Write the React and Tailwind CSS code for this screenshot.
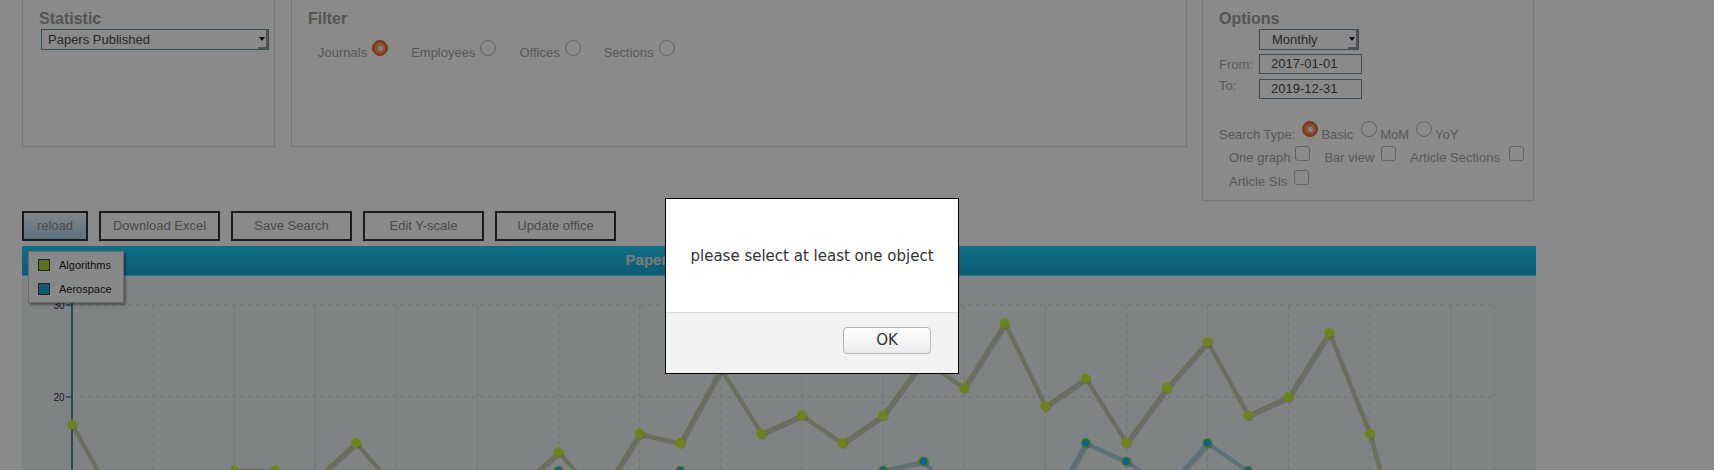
import React from "react";

const ALG = [17, 9, 8, 10, 12, 12, 11, 15, 10, 7, 9, 10, 14, 9, 16, 15, 23, 16, 18, 15, 18, 24, 21, 28, 19, 22, 15, 21, 26, 18, 20, 27, 16, 0, 0, 0];
const AER = [3, 2, 4, 5, 3, 6, 4, 5, 7, 4, 6, 8, 12, 7, 9, 12, 8, 6, 9, 8, 12, 13, 8, 9, 7, 15, 13, 10, 15, 12, 8, 10, 7, 0, 0, 0];

// plot coords are relative to the plot area (page x - 22, page y - 276)
const X0 = 50;
const STEP = 40.55;
const px = (i) => X0 + STEP * i;
const py = (v) => 29 + (30 - v) * 9.2;
const toPath = (data) => data.map((v, i) => `${i ? "L" : "M"}${px(i)},${py(v)}`).join(" ");

function Radio({ checked }) {
  if (checked) {
    return (
      <span className="flex h-4 w-4 shrink-0 items-center justify-center rounded-full border border-[#c8602f] bg-[#f4793f]">
        <span className="flex h-[10px] w-[10px] items-center justify-center rounded-full bg-[#ff9a66]">
          <span className="h-[5px] w-[5px] rounded-full bg-[#f2f2f2]" />
        </span>
      </span>
    );
  }
  return <span className="block h-4 w-4 shrink-0 rounded-full border border-[#b4b4b4] bg-white" />;
}

function Checkbox() {
  return <span className="mb-[4px] block h-[15px] w-[15px] shrink-0 rounded-[3px] border border-[#b4b4b4] bg-white" />;
}

function FakeSelect({ value, className }) {
  return (
    <div className={`flex h-[21px] items-center justify-between border border-[#6f8998] bg-white text-[13px] text-[#4a4a4a] ${className}`}>
      <span>{value}</span>
      <span className="flex h-full w-[10px] items-center justify-center border-b-2 border-r-2 border-[#9a9a9a]">
        <span className="h-0 w-0 border-l-[3px] border-r-[3px] border-t-[4px] border-l-transparent border-r-transparent border-t-[#111]" />
      </span>
    </div>
  );
}

function Series({ data, line, fill, ring }) {
  const d = toPath(data);
  return (
    <g>
      <path d={d} transform="translate(1.5,1.5)" fill="none" stroke="rgba(0,0,0,0.16)" strokeWidth="4" strokeLinejoin="round" />
      <path d={d} fill="none" stroke={line} strokeWidth="3.5" strokeLinejoin="round" />
      {data.map((v, i) => (
        <g key={i}>
          <circle cx={px(i) + 1} cy={py(v) + 1} r="4.8" fill="rgba(0,0,0,0.14)" />
          <circle cx={px(i)} cy={py(v)} r="4.5" fill={fill} stroke={ring} strokeWidth="1" />
        </g>
      ))}
    </g>
  );
}

function Chart() {
  const verticals = [];
  for (let k = 1; k <= 17; k++) verticals.push(X0 + 81.1 * k);
  return (
    <svg width="1514" height="194" className="block">
      {verticals.map((x) => (
        <line key={x} x1={x} y1={29} x2={x} y2={194} stroke="#cbd3d3" strokeDasharray="4 4" />
      ))}
      <line x1={1472} y1={29} x2={1472} y2={194} stroke="#cbd3d3" strokeDasharray="4 4" />
      {[29, 121].map((y) => (
        <line key={y} x1={X0} y1={y} x2={1472} y2={y} stroke="#cbd3d3" strokeDasharray="4 4" />
      ))}
      <line x1={X0} y1={27} x2={X0} y2={194} stroke="#56899b" strokeWidth="2" />
      {[
        [30, 29],
        [20, 121],
      ].map(([v, y]) => (
        <g key={v}>
          <line x1={44} y1={y} x2={X0} y2={y} stroke="#56899b" strokeWidth="1.5" />
          <text x={42.5} y={y + 3.6} textAnchor="end" fontSize="10" fill="#333" fontFamily="Liberation Sans, Arial, sans-serif">
            {v}
          </text>
        </g>
      ))}
      <Series data={AER} line="#a8cfdd" fill="#14bfee" ring="#c8e400" />
      <Series data={ALG} line="#c4cead" fill="#c0f542" ring="#f0f000" />
    </svg>
  );
}

export default function App() {
  return (
    <div className="relative h-screen overflow-hidden bg-white font-['Liberation_Sans',Arial,sans-serif] text-[13px]">
      <div className="pl-[22px]">
        {/* top panels (page is scrolled a little, top borders are off screen) */}
        <div className="-mt-[6px] flex items-start">
          <section className="h-[153px] w-[253px] border border-[#dddddd] pl-[16px] pt-[15px]">
            <h3 className="text-[16px] font-bold leading-[18px] text-[#9b9b9b]">Statistic</h3>
            <FakeSelect value="Papers Published" className="ml-[2px] mt-[1px] w-[228px] pl-[6px]" />
          </section>

          <section className="ml-[16px] h-[153px] w-[896px] border border-[#dddddd] pl-[16px] pt-[15px]">
            <h3 className="text-[16px] font-bold leading-[18px] text-[#9b9b9b]">Filter</h3>
            <div className="ml-[10px] mt-[12px] flex items-end text-[#a6a6a6]">
              {[
                ["Journals", true],
                ["Employees", false],
                ["Offices", false],
                ["Sections", false],
              ].map(([name, on]) => (
                <label key={name} className="mr-[23px] flex items-end">
                  <span className="leading-[15px]">{name}</span>
                  <span className="mb-[4px] ml-[5px] flex">
                    <Radio checked={on} />
                  </span>
                </label>
              ))}
            </div>
          </section>

          <section className="ml-[15px] h-[207px] w-[332px] border border-[#dddddd] pl-[16px] pt-[15px] text-[#a6a6a6]">
            <h3 className="text-[16px] font-bold leading-[18px] text-[#9b9b9b]">Options</h3>
            <FakeSelect value="Monthly" className="ml-[40px] mt-[1px] w-[100px] pl-[12px]" />
            <div className="mt-[4px] flex items-center">
              <span className="w-[40px] leading-[15px]">From:</span>
              <div className="flex h-[20px] w-[103px] items-center border border-[#6f8998] bg-white pl-[11px] text-[#4a4a4a]">2017-01-01</div>
            </div>
            <div className="mt-[5px] flex items-start">
              <span className="-mt-px w-[40px] leading-[15px]">To:</span>
              <div className="flex h-[20px] w-[103px] items-center border border-[#6f8998] bg-white pl-[11px] text-[#4a4a4a]">2019-12-31</div>
            </div>
            <div className="mt-[22px] flex items-end">
              <span className="leading-[15px]">Search Type:</span>
              <span className="mb-[5px] ml-[7px] flex">
                <Radio checked />
              </span>
              <span className="ml-[3px] leading-[15px]">Basic</span>
              <span className="mb-[5px] ml-[8px] flex">
                <Radio />
              </span>
              <span className="ml-[3px] leading-[15px]">MoM</span>
              <span className="mb-[5px] ml-[7px] flex">
                <Radio />
              </span>
              <span className="ml-[3px] leading-[15px]">YoY</span>
            </div>
            <div className="ml-[10px] mt-[4px] flex items-end">
              <span className="leading-[15px]">One graph</span>
              <span className="ml-[5px] flex">
                <Checkbox />
              </span>
              <span className="ml-[14px] leading-[15px]">Bar view</span>
              <span className="ml-[7px] flex">
                <Checkbox />
              </span>
              <span className="ml-[14px] leading-[15px]">Article Sections</span>
              <span className="ml-[9px] flex">
                <Checkbox />
              </span>
            </div>
            <div className="ml-[10px] mt-[5px] flex items-end">
              <span className="leading-[15px]">Article SIs</span>
              <span className="ml-[6px] flex">
                <Checkbox />
              </span>
            </div>
          </section>
        </div>

        {/* action buttons */}
        <div className="mt-[10px] flex gap-[11px]">
          <button className="h-[30px] w-[66px] border-2 border-[#343434] bg-gradient-to-b from-[#f2f8ff] to-[#a9d0ec] text-[#8a8a8a]">reload</button>
          {["Download Excel", "Save Search", "Edit Y-scale", "Update office"].map((b) => (
            <button key={b} className="h-[30px] w-[121px] border-2 border-[#343434] bg-white text-[#8a8a8a]">
              {b}
            </button>
          ))}
        </div>

        {/* chart */}
        <div className="relative mt-[5px] w-[1514px] bg-[#ebf2f2]">
          <div className="flex h-[30px] items-center justify-center border-b border-[#4fd6f5] bg-gradient-to-b from-[#20cdf5] to-[#18a8d6] text-[15px] font-bold text-[#e4e4e4]">
            Papers Published (2017-01-01 - 2019-12-31)
          </div>
          <Chart />
          <div className="absolute left-[6px] top-[5px] flex h-[52px] w-[96px] flex-col justify-center gap-[8px] border border-[#c4c4c4] bg-[#fafcfc] pl-[9px] text-[11px] text-[#222] shadow-[2px_2px_2px_rgba(0,0,0,0.35)]">
            <div className="flex items-center gap-[9px]">
              <span className="h-[12px] w-[12px] border border-[#444] bg-[#a8cd39]" />
              Algorithms
            </div>
            <div className="flex items-center gap-[9px]">
              <span className="h-[12px] w-[12px] border border-[#444] bg-[#1aa8d1]" />
              Aerospace
            </div>
          </div>
        </div>
      </div>

      {/* modal */}
      <div className="fixed inset-0 bg-black/[0.46]" />
      <div className="fixed left-[665px] top-[198px] flex h-[176px] w-[294px] flex-col border border-black bg-white font-['DejaVu_Sans',sans-serif] text-[15px] text-[#333]">
        <div className="flex flex-1 items-center justify-center pt-[1px]">please select at least one object</div>
        <div className="flex h-[61px] items-start justify-end border-t border-[#dedede] bg-[#f2f2f2] pr-[27px] pt-[14px]">
          <button className="h-[27px] w-[88px] rounded-[4px] border border-[#b6b6b6] bg-gradient-to-b from-white to-[#ececec] text-[#333]">OK</button>
        </div>
      </div>
    </div>
  );
}
